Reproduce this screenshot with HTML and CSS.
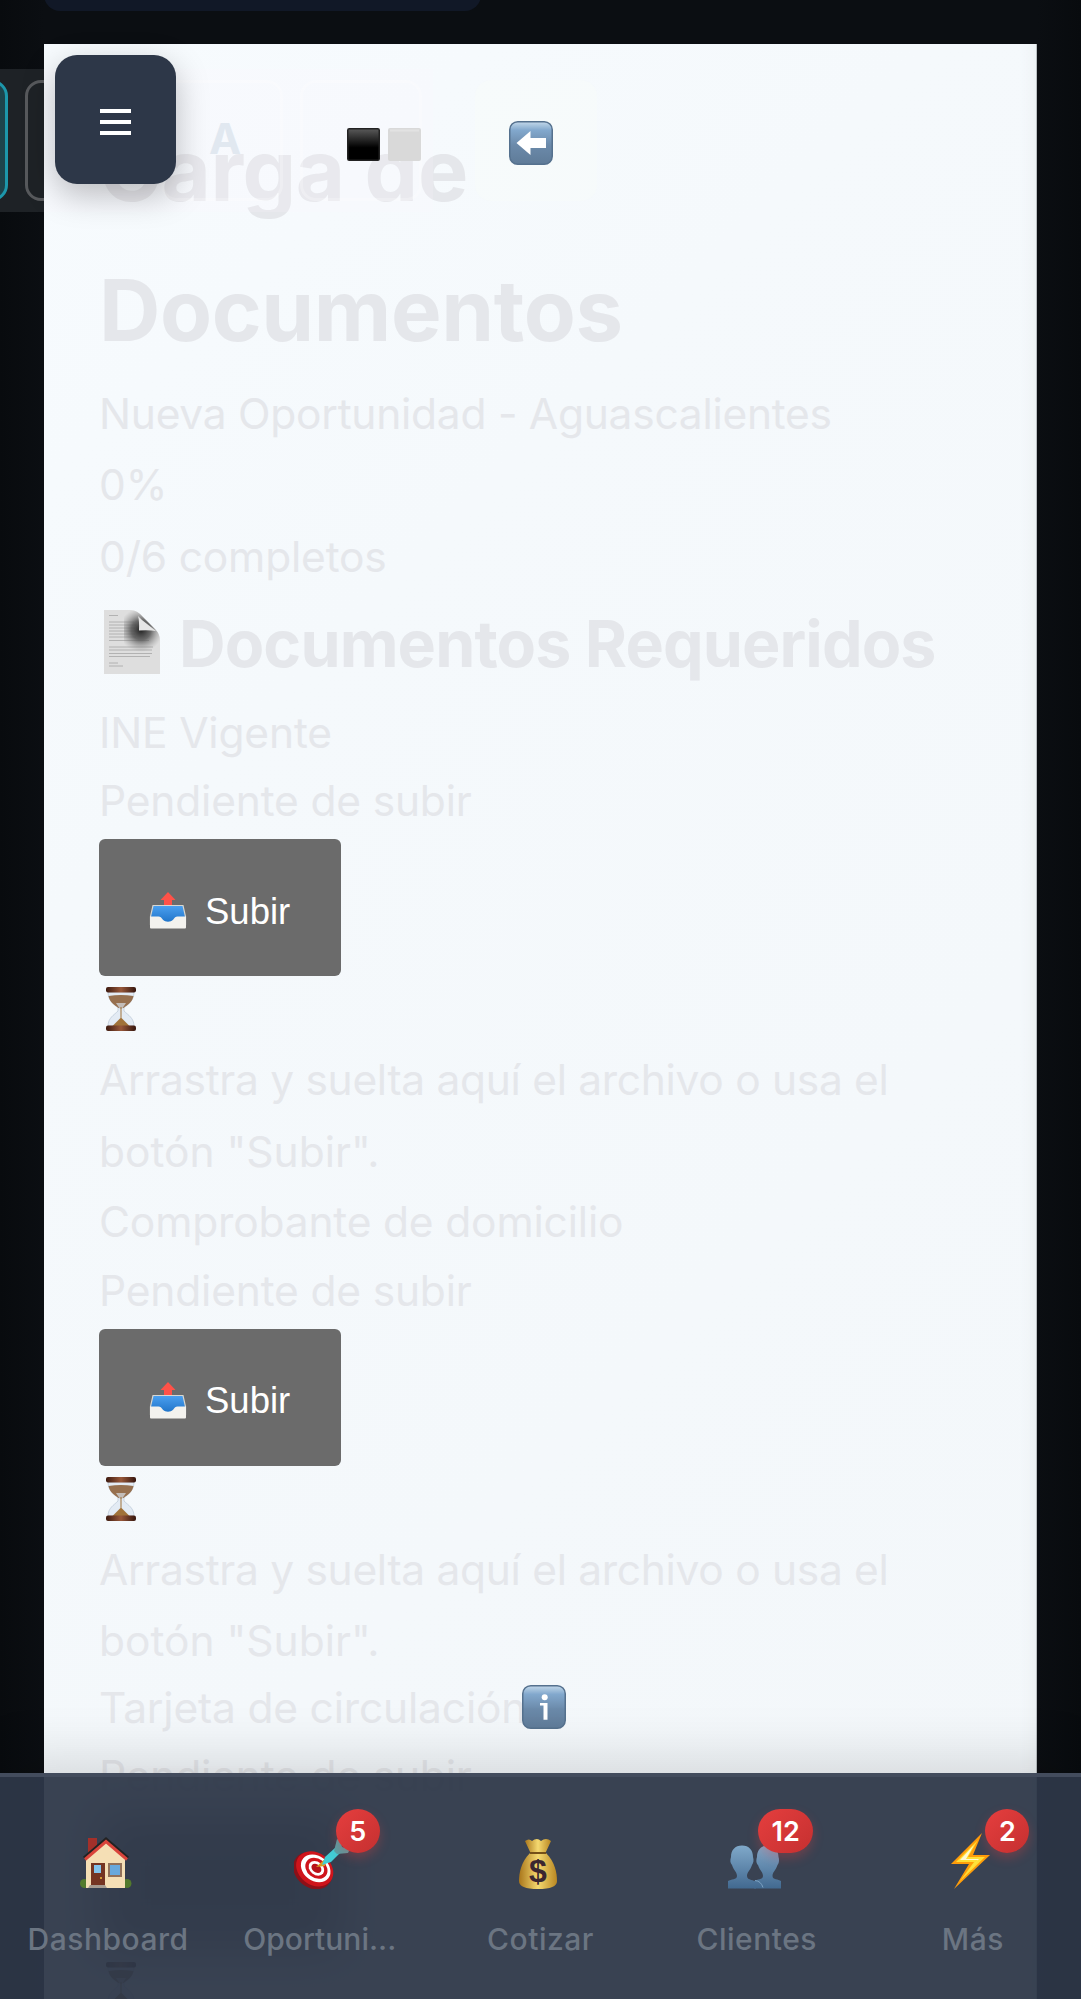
FILE: index.html
```html
<!DOCTYPE html>
<html lang="es">
<head>
<meta charset="utf-8">
<title>Carga de Documentos</title>
<link rel="stylesheet" href="styles.css">
</head>
<body>
<svg class="defs" width="0" height="0">
  <defs>
    <linearGradient id="blue" x1="0" y1="0" x2="0" y2="1"><stop offset="0" stop-color="#c3d8ea"/><stop offset=".2" stop-color="#82a8cd"/><stop offset=".55" stop-color="#6b8aaa"/><stop offset="1" stop-color="#5f7b98"/></linearGradient>
    <linearGradient id="black" x1="0" y1="0" x2="0" y2="1"><stop offset="0" stop-color="#5a5a5a"/><stop offset=".6" stop-color="#000"/></linearGradient>
    <radialGradient id="fold" gradientUnits="userSpaceOnUse" cx="37" cy="20" r="22"><stop offset="0" stop-color="#222"/><stop offset=".45" stop-color="#555" stop-opacity=".85"/><stop offset="1" stop-color="#999" stop-opacity="0"/></radialGradient>
    <linearGradient id="wood" x1="0" y1="0" x2="1" y2="0"><stop offset="0" stop-color="#3d1a10"/><stop offset=".5" stop-color="#98583a"/><stop offset="1" stop-color="#35150d"/></linearGradient>
    <linearGradient id="people" x1="0" y1="0" x2="0" y2="1"><stop offset="0" stop-color="#80a9ca"/><stop offset="1" stop-color="#426990"/></linearGradient>
    <linearGradient id="gold" x1="0" y1="0" x2="1" y2="0"><stop offset="0" stop-color="#a9761b"/><stop offset=".5" stop-color="#f5d970"/><stop offset="1" stop-color="#b98722"/></linearGradient>
    <linearGradient id="tray" x1="0" y1="0" x2="0" y2="1"><stop offset="0" stop-color="#4ba0f0"/><stop offset="1" stop-color="#1b6fc4"/></linearGradient>
    <symbol id="upload" viewBox="0 0 37 37">
      <path d="M3.500 13.500h30l2.500 11v8H1v-8z" fill="url(#tray)" stroke="#d8d6d0" stroke-width="1.200"/>
      <path d="M18.500 0l7.500 8h-3.500v5h-8V8H11z" fill="#ff5248"/>
      <path d="M.5 24.500h8.500c2 0 2.800 1.300 4.200 2.900 2.800 3 7.800 3 10.600 0 1.400-1.600 2.200-2.900 4.200-2.900h8.500v11q0 1-1 1h-34q-1 0-1-1z" fill="#f3f2ee"/>
    </symbol>
    <symbol id="hourglass" viewBox="0 0 30 44">
      <path d="M2 5h26c0 9-6 12-10 16v3c4 4 10 7 10 15H2c0-8 6-11 10-15v-3C8 17 2 14 2 5z" fill="#e3ebf4" stroke="#b9c6d4" stroke-width=".7"/>
      <path d="M2.500 9q12.500-2 25 0c-1 6-6 9-10 12h-5c-4-3-9-6-10-12z" fill="#97704f"/>
      <path d="M10 16h10l-4 6h-2z" fill="#c3bdb9"/>
      <path d="M14.500 20h1v11l8 8h-17l8-8z" fill="#a07239"/>
      <rect width="30" height="5.500" rx="2" fill="url(#wood)"/><rect y="38.500" width="30" height="5.500" rx="2" fill="url(#wood)"/>
    </symbol>
  </defs>
</svg>

<div class="page">
  <div class="backdrop-card"></div>
  <div class="backdrop-bar"><span class="tile tile-teal"></span><span class="tile tile-grey"></span></div>

  <main class="sheet">
    <h1 class="title">Carga de<br>Documentos</h1>
    <p class="line subtitle">Nueva Oportunidad - Aguascalientes</p>
    <p class="line">0%</p>
    <p class="line">0/6 completos</p>
    <h2 class="section">
      <svg class="doc" viewBox="0 0 56 64">
        <path d="M0 0h27q6 0 12 7l12 12q5 5 5 11v34H0z" fill="#dedede"/>
        <path d="M5 5.500h9M5 12h25M5 15h27M5 18h26M5 21h27M5 24h26M5 27h27M5 30.500h40M5 37h44M5 40h43M5 43.500h43M5 46.500h41M5 53h9M5 56h14" stroke="#909090" stroke-width=".8" opacity=".7"/>
        <path d="M20 0h7q6 0 12 7l12 12q5 5 5 11v12H20z" fill="url(#fold)"/>
        <path d="M34 6q2 2 4 4l14 11q-6-1-17-.5Q35.500 11 34 6z" fill="#e6e6e6"/>
      </svg>
      <span class="section-text">Documentos Requeridos</span>
    </h2>

    <section class="item">
      <p class="line name">INE Vigente</p>
      <p class="line status">Pendiente de subir</p>
      <button class="upload"><svg class="tray"><use href="#upload"/></svg><span>Subir</span></button>
      <svg class="glass"><use href="#hourglass"/></svg>
      <p class="line hint">Arrastra y suelta aquí el archivo o usa el</p>
      <p class="line hint-end">botón "Subir".</p>
    </section>
    <section class="item item-short">
      <p class="line name">Comprobante de domicilio</p>
      <p class="line status">Pendiente de subir</p>
      <button class="upload"><svg class="tray"><use href="#upload"/></svg><span>Subir</span></button>
      <svg class="glass"><use href="#hourglass"/></svg>
      <p class="line hint">Arrastra y suelta aquí el archivo o usa el</p>
      <p class="line hint-end">botón "Subir".</p>
    </section>
    <section class="item">
      <p class="line name">Tarjeta de circulación</p>
      <p class="line status">Pendiente de subir</p>
      <div class="upload veiled"></div>
      <svg class="glass"><use href="#hourglass"/></svg>
    </section>
  </main>

  <div class="toolbar">
    <span class="tool tool-a">A</span>
    <span class="tool tool-contrast">
      <svg width="74" height="33" viewBox="0 0 74 33"><rect x=".75" y=".75" width="31.500" height="31.500" rx="1.500" fill="url(#black)" stroke="#222" stroke-width="1.500"/><rect x="41" width="33" height="33" rx="2" fill="#d9d9d9"/><path d="M43 2.500h29" stroke="#e2e2e2" stroke-width="2"/></svg>
    </span>
  </div>
  <div class="back">
    <svg width="44" height="44" viewBox="0 0 44 44"><rect x=".75" y=".75" width="42.500" height="42.500" rx="8" fill="url(#blue)" stroke="#55718e" stroke-width="1.500"/><path d="M7.500 22L21.500 10v7H37v10H21.500v7z" fill="#fff"/></svg>
  </div>
  <svg class="info" viewBox="0 0 44 44"><rect x=".75" y=".75" width="42.500" height="42.500" rx="8" fill="url(#blue)" stroke="#55718e" stroke-width="1.500"/><circle cx="22.700" cy="12.300" r="3" fill="#fff"/><path d="M18 18h7.500v16.700h-4V20.500H18z" fill="#fff"/></svg>

  <button class="menu"><i></i><i></i><i></i></button>

  <nav class="nav">
    <a class="tab"><span class="icon">
      <svg width="52" height="52" viewBox="0 0 52 52"><path d="M8 1h9v16H8z" fill="#a3302a"/><circle cx="4.500" cy="46.500" r="4.500" fill="#527a2d"/><circle cx="47" cy="46.500" r="4.500" fill="#527a2d"/><path d="M6 20L26 3l19 18v30H6z" fill="#f5dfb5"/><path d="M4 21L26 2l22 19" fill="none" stroke="#222" stroke-width="3"/><path d="M5 22.500L26 4.500l21 18" fill="none" stroke="#d9443b" stroke-width="3"/><path d="M11 26h14v25H11z" fill="#753522"/><path d="M14 28h7v8h-7z" fill="#83c4ed"/><circle cx="21" cy="41" r="1" fill="#f3bd3a"/><path d="M29 27h12v12H29z" fill="#69a9dc" stroke="#927159" stroke-width="2"/><path d="M8 51l2-3h15l2 3z" fill="#a69b90"/></svg>
    </span><span class="label">Dashboard</span></a>
    <a class="tab"><span class="icon">
      <svg width="56" height="52" viewBox="0 0 56 52"><g transform="rotate(38 20 32)"><ellipse cx="20" cy="34" rx="21" ry="17" fill="#8d1018"/><ellipse cx="20.500" cy="31.500" rx="20" ry="16" fill="#cf141b"/><ellipse cx="21" cy="30.500" rx="16" ry="12.500" fill="#fff"/><ellipse cx="21.500" cy="30" rx="12" ry="9.500" fill="#cf141b"/><ellipse cx="21.500" cy="30" rx="8.500" ry="6.500" fill="#fff"/><ellipse cx="21.500" cy="30" rx="5.500" ry="4" fill="#b8131a"/></g><path d="M22 30l10-9-1 8z" fill="#d79a22"/><path d="M28 28l3-8 10-9 5 5-9 9z" fill="#41ccd5"/><path d="M40 14l3-12 4 2 1 6 8 2-2 4-11 1z" fill="#559fa5"/></svg>
      <b class="badge">5</b></span><span class="label label-cut">Oportuni...</span></a>
    <a class="tab"><span class="icon">
      <svg width="38" height="51" viewBox="0 0 38 51"><path d="M6 3q4-3 7 0 5-4 9 0 5-4 10 0l-6 13H12z" fill="url(#gold)"/><path d="M11 15h16C36 24 38 35 38 43q0 8-19 8T0 43c0-8 2-19 11-28z" fill="url(#gold)"/><path d="M11 15h16" stroke="#755018" stroke-width="2"/><text x="19" y="44" text-anchor="middle" class="dollar">$</text></svg>
    </span><span class="label">Cotizar</span></a>
    <a class="tab"><span class="icon">
      <svg width="53" height="44" viewBox="0 0 53 44"><g fill="url(#people)"><path d="M14 .5C21 .5 25 5 25 12c1 3 .5 6-1 8-2 6-5 7-5 11 0 5 8 3 9 7v5.500H0V36c3-2 9-1 9-5 0-4-3-5-5-11-2-2-2-5-1-8C3 5 7 .5 14 .5z"/><path d="M39.500 .5c7 0 11 5 11 11.500 1 3 .5 6-1 8-2 6-5 7-5 11 0 4 6 3 8.500 5v7.500H26V36c3-2 9-1 9-5 0-4-3-5-5-11-2-2-2-5-1-8 0-6.500 4-11.500 10.500-11.500z"/></g><path d="M27 35.500q6 .5 8 7" fill="none" stroke="#7da3c3"/></svg>
      <b class="badge wide">12</b></span><span class="label">Clientes</span></a>
    <a class="tab"><span class="icon">
      <svg width="39" height="56" viewBox="0 0 39 56"><path d="M31 0L0 31h18L3 56l36-34H22z" fill="#ff9d0a"/><path d="M27 7L5 29h18L9 48l25-24H17z" fill="#ffdf35"/><path d="M23 12L9 27h18L15 41l13-15H15z" fill="#fffbd2"/></svg>
      <b class="badge last">2</b></span><span class="label">Más</span></a>
  </nav>
</div>
</body>
</html>
```
FILE: styles.css
```css
* { box-sizing: border-box; }
body { margin: 0; font-family: Inter, "Liberation Sans", sans-serif; }
.defs { position: absolute; }
.page { position: relative; width: 1081px; height: 1999px; overflow: hidden; padding: 44px 44px 0; background: linear-gradient(90deg, #080b0e, #0b0e12 44px 1037px, #080b0e); }
.backdrop-card { position: absolute; left: 44px; top: -40px; width: 437px; height: 51px; border-radius: 16px; background: #111827; }
.backdrop-bar { position: absolute; left: 0; top: 69px; width: 60px; height: 143px; background: #1e2226; }
.tile { position: absolute; top: 11px; width: 122px; height: 121px; border: 3px solid #57595c; border-radius: 16px; }
.tile-teal { left: -114px; border-color: #1d97ab; background: #1d444c; }
.tile-grey { left: 25px; }

.sheet { position: relative; width: 993px; height: 1960px; padding: 57px 55px 0; color: #e5e7eb; background: linear-gradient(135deg, #f7fbfe, #f5f9fc 30%, #f3f7fa); box-shadow: inset -1px 0 #b9bec1, inset -14px 0 18px -14px #e4eaec; }
.title { margin: 0; font-size: 85px; line-height: 140px; font-weight: 700; letter-spacing: -.4px; white-space: nowrap; }
.line { margin: 0; font-size: 42.500px; line-height: 71.500px; letter-spacing: -.18px; white-space: nowrap; }
.subtitle { margin-top: -3.500px; letter-spacing: -.26px; }
.section { display: flex; align-items: center; gap: 19px; margin: 0; padding-left: 5px; height: 104.500px; font-size: 64.500px; font-weight: 700; line-height: 105px; letter-spacing: -.9px; white-space: nowrap; }
.doc { flex: none; width: 56px; height: 64px; margin-bottom: 5px; }
.item { height: 489.500px; }
.item-short { height: 485.500px; }
.status { line-height: 66px; margin-bottom: 5px; }
.hint { letter-spacing: -.31px; }
.hint-end { letter-spacing: 0; }
.upload { display: flex; align-items: center; gap: 18px; width: 242px; height: 137px; padding: 0 0 0 50px; border: 0; border-radius: 6px; background: #6b6b6b; color: #fff; font: 36.500px "Liberation Sans", sans-serif; }
.upload span { padding-top: 8px; }
.veiled { filter: blur(22px); opacity: .8; }
.tray { width: 38px; height: 37px; margin-top: 6px; }
.glass { display: block; width: 30px; height: 44px; margin: 11px 0 13px 7px; }

.toolbar { position: absolute; left: 44px; top: 69px; width: 389px; height: 143px; display: flex; gap: 17px; padding: 11px 0 0 117px; background: rgba(255, 250, 252, .15); }
.tool { width: 122px; height: 121px; border: 3px solid rgba(255, 255, 255, .25); border-radius: 16px; }
.tool-a { color: #e1e8f0; font-size: 43px; font-weight: 700; line-height: 111px; text-align: center; padding-left: 6px; }
.tool-contrast { padding: 45px 0 0 44px; }
.tool-contrast svg, .back svg { display: block; }
.back { position: absolute; left: 475px; top: 80px; width: 122px; height: 121px; padding: 41px 0 0 34px; border-radius: 16px; background: rgba(248, 252, 250, .5); }
.info { position: absolute; left: 522px; top: 1685px; width: 44px; height: 44px; }
.menu { position: absolute; left: 55px; top: 55px; width: 121px; height: 129px; display: flex; flex-direction: column; align-items: center; justify-content: center; gap: 6.500px; padding: 5px 0 0; border: 0; border-radius: 22px; background: #2d3748; box-shadow: 0 11px 33px rgba(0, 0, 0, .25); }
.menu i { width: 31px; height: 4.300px; background: #fff; }

.nav { position: absolute; left: 0; right: 0; bottom: 0; height: 226px; display: grid; grid-template-columns: repeat(5, 1fr); border-top: 4px solid #434c5d; background: rgba(45, 55, 72, .945); box-shadow: 0 -11px 55px rgba(0, 0, 0, .14); }
.tab { display: flex; flex-direction: column; align-items: center; padding-top: 56px; }
.icon { position: relative; display: flex; justify-content: center; align-items: flex-end; width: 60px; height: 56px; margin-right: 5px; }
.icon svg { display: block; }
.label { margin-top: 32px; color: #6b7582; font-size: 30px; line-height: 36px; font-weight: 500; letter-spacing: .5px; white-space: nowrap; }
.label-cut { margin-right: 9px; letter-spacing: 0; }
.badge { position: absolute; left: 44px; top: -24px; min-width: 44px; height: 44px; border-radius: 22px; background: linear-gradient(135deg, #e53e3e, #c53030); color: #fff; font-size: 27px; line-height: 46px; font-weight: 600; text-align: center; box-shadow: 0 5px 11px rgba(229, 62, 62, .3); }
.badge.wide { width: 55px; left: 34px; }
.badge.last { left: 45px; }
.dollar { font: 700 32px "Liberation Sans", sans-serif; fill: #3a2630; }
```
